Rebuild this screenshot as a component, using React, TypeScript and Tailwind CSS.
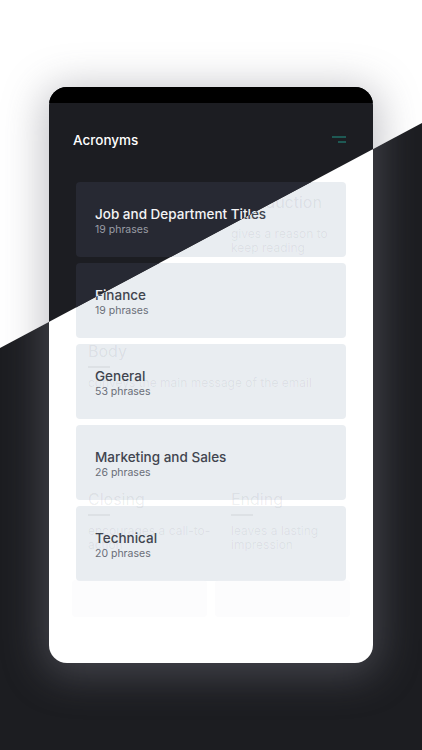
import React from "react";

const items = [
  { t: "Job and Department Titles", n: 19 },
  { t: "Finance", n: 19 },
  { t: "General", n: 53 },
  { t: "Marketing and Sales", n: 26 },
  { t: "Technical", n: 20 },
];

function MenuIcon() {
  return (
    <svg width="16" height="8" viewBox="0 0 16 8" fill="none">
      <line x1="1" y1="1" x2="15" y2="1" stroke="#1f6e66" strokeWidth="1.6" />
      <line x1="7" y1="6" x2="15" y2="6" stroke="#1f6e66" strokeWidth="1.6" />
    </svg>
  );
}

function GhostBlock({ title, lines }: { title: string; lines: string[] }) {
  return (
    <div className="flex flex-col">
      <div className="whitespace-nowrap text-[16px] leading-[20px] text-[#1b2a3a]/[0.08]">{title}</div>
      <div className="mt-[5px] h-[2px] w-[22px] bg-[#1b2a3a]/[0.06]" />
      <div className="mt-[8px] text-[12px] leading-[14px] text-[#1b2a3a]/[0.07]">
        {lines.map((l) => (
          <div key={l} className="whitespace-nowrap">
            {l}
          </div>
        ))}
      </div>
    </div>
  );
}

function Ghost() {
  return (
    <div className="pointer-events-none absolute inset-0 flex flex-col px-[23px] pt-[105px]">
      <div className="grid h-[149px] grid-cols-2 gap-[8px]">
        <div className="pl-[16px]" />
        <div className="pl-[16px]">
          <GhostBlock title="Introduction" lines={["gives a reason to", "keep reading"]} />
        </div>
      </div>
      <div className="h-[148px] pl-[16px]">
        <GhostBlock title="Body" lines={["conveys the main message of the email"]} />
      </div>
      <div className="grid h-[91px] grid-cols-2 gap-[8px]">
        <div className="pl-[16px]">
          <GhostBlock title="Closing" lines={["encourages a call-to-", "action"]} />
        </div>
        <div className="pl-[16px]">
          <GhostBlock title="Ending" lines={["leaves a lasting", "impression"]} />
        </div>
      </div>
      <div className="grid h-[37px] grid-cols-2 gap-[8px]">
        <div className="rounded-[4px] bg-[#f3f5f7]/25" />
        <div className="rounded-[4px] bg-[#f3f5f7]/25" />
      </div>
    </div>
  );
}

function Phone({ dark }: { dark: boolean }) {
  return (
    <div
      className={
        dark
          ? "relative mx-auto mt-[87px] h-[576px] w-[324px] overflow-hidden rounded-[18px] bg-[#1c1d22] shadow-[0_6px_40px_6px_rgba(120,120,130,0.45)]"
          : "relative mx-auto mt-[87px] h-[576px] w-[324px] overflow-hidden rounded-[18px] bg-white shadow-[0_6px_40px_6px_rgba(120,120,130,0.45)]"
      }
    >
      <div className={dark ? "h-[16px] bg-black" : "h-[16px] bg-white"} />
      <div className="flex items-center justify-between pl-[24px] pr-[26px] pt-[28px]">
        <div
          className={
            dark
              ? "text-[13.5px] leading-[18px] font-medium text-white"
              : "text-[13.5px] leading-[18px] font-medium text-[#474b55]"
          }
        >
          Acronyms
        </div>
        <MenuIcon />
      </div>
      <div className="mt-[33px] flex flex-col gap-[6px] px-[27px]">
        {items.map((it) => (
          <div
            key={it.t}
            className={
              dark
                ? "flex h-[75px] flex-col justify-center rounded-[4px] bg-[#272933] px-[19px] pt-[3px]"
                : "flex h-[75px] flex-col justify-center rounded-[4px] bg-[#e9edf1] px-[19px] pt-[3px]"
            }
          >
            <div
              className={
                dark
                  ? "text-[13.5px] leading-[17px] font-medium text-[#f4f4f6]"
                  : "text-[13.5px] leading-[17px] font-medium text-[#41454f]"
              }
            >
              {it.t}
            </div>
            <div
              className={
                dark
                  ? "text-[10.5px] leading-[14px] text-[#9a9da6]"
                  : "text-[10.5px] leading-[14px] text-[#6a6e78]"
              }
            >
              {it.n} phrases
            </div>
          </div>
        ))}
      </div>
      {!dark && <Ghost />}
    </div>
  );
}

export default function App() {
  return (
    <div className="relative h-[750px] w-full overflow-hidden [font-family:Inter,'Liberation_Sans',sans-serif]">
      <div className="absolute inset-0 bg-[#1c1d21]">
        <Phone dark={false} />
      </div>
      <div className="absolute inset-0 bg-white [clip-path:polygon(0_0,100%_0,100%_123px,0_348px)]">
        <Phone dark={true} />
      </div>
    </div>
  );
}
